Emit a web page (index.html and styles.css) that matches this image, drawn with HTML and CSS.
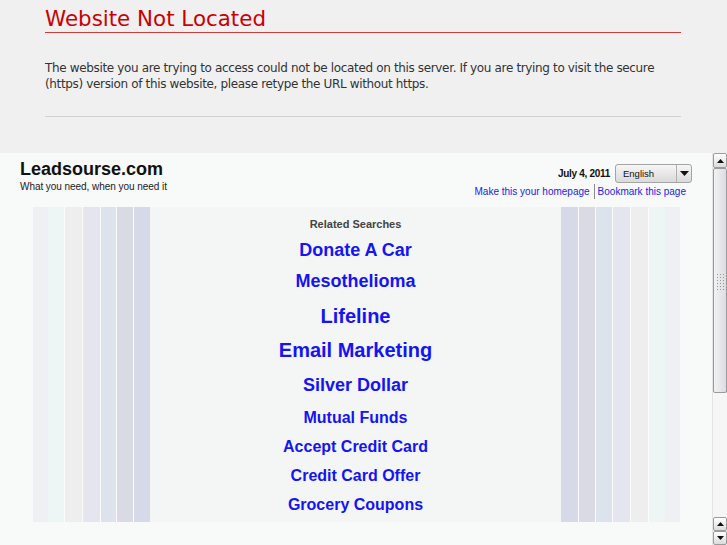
FILE: index.html
```html
<!DOCTYPE html>
<html>
<head>
<meta charset="utf-8">
<title>Website Not Located</title>
<link rel="stylesheet" href="styles.css">
</head>
<body>
<div class="notice">
  <h1 class="notice-title">Website Not Located</h1>
  <p class="notice-text">The website you are trying to access could not be located on this server. If you are trying to visit the secure (https) version of this website, please retype the URL without https.</p>
  <div class="notice-rule"></div>
</div>
<div class="frame">
  <div class="frame-body">
    <div class="site-header">
      <div class="brand">
        <div class="brand-name">Leadsourse.com</div>
        <div class="brand-tag">What you need, when you need it</div>
      </div>
      <div class="tools">
        <div class="tools-top">
          <span class="date">July 4, 2011</span>
          <div class="lang-select">
            <span class="lang-label">English</span>
            <span class="lang-arrow"><svg width="9" height="5" viewBox="0 0 9 5"><polygon points="0,0 9,0 4.5,5" fill="#111"/></svg></span>
          </div>
        </div>
        <div class="tools-links">
          <a class="tool-link" href="#">Make this your homepage</a>
          <span class="tool-sep"></span>
          <a class="tool-link" href="#">Bookmark this page</a>
        </div>
      </div>
    </div>
    <div class="stage">
      <div class="stripes">
        <div class="st st-dot w15"></div>
        <div class="st st-cyan w16"></div>
        <div class="gap"></div>
        <div class="st st-gray w17"></div>
        <div class="gap"></div>
        <div class="st st-lav w17"></div>
        <div class="gap"></div>
        <div class="st st-blue w15"></div>
        <div class="gap"></div>
        <div class="st st-mauve w16"></div>
        <div class="gap"></div>
        <div class="st st-deep w16"></div>
      </div>
      <div class="searches">
        <div class="searches-title">Related Searches</div>
        <a class="kw f18" href="#">Donate A Car</a>
        <a class="kw f18" href="#">Mesothelioma</a>
        <a class="kw f20 lower" href="#">Lifeline</a>
        <a class="kw f20" href="#">Email Marketing</a>
        <a class="kw f18 roomy" href="#">Silver Dollar</a>
        <a class="kw f16" href="#">Mutual Funds</a>
        <a class="kw f16" href="#">Accept Credit Card</a>
        <a class="kw f16" href="#">Credit Card Offer</a>
        <a class="kw f16" href="#">Grocery Coupons</a>
      </div>
      <div class="stripes">
        <div class="st st-deep w17"></div>
        <div class="gap"></div>
        <div class="st st-mauve w16"></div>
        <div class="gap"></div>
        <div class="st st-blue w16"></div>
        <div class="gap"></div>
        <div class="st st-lav w17"></div>
        <div class="gap"></div>
        <div class="st st-gray w17"></div>
        <div class="gap"></div>
        <div class="st st-cyan w16"></div>
        <div class="st st-dot w15"></div>
      </div>
    </div>
  </div>
  <div class="scrollbar">
    <div class="sb-btn sb-top"><svg width="7" height="4" viewBox="0 0 7 4"><polygon points="0,4 7,4 3.5,0" fill="#111"/></svg></div>
    <div class="sb-thumb"><div class="sb-grip"></div></div>
    <div class="sb-track"></div>
    <div class="sb-btn"><svg width="7" height="4" viewBox="0 0 7 4"><polygon points="0,4 7,4 3.5,0" fill="#111"/></svg></div>
    <div class="sb-btn"><svg width="7" height="4" viewBox="0 0 7 4"><polygon points="0,0 7,0 3.5,4" fill="#111"/></svg></div>
  </div>
</div>
</body>
</html>
```
FILE: styles.css
```css
html, body {
  margin: 0;
  padding: 0;
  height: 545px;
  overflow: hidden;
  background: #f0f0f0;
}

.notice {
  height: 153px;
  box-sizing: border-box;
  padding: 7px 46px 0 45px;
  font-family: "DejaVu Sans", sans-serif;
}

.notice-title {
  margin: 0;
  padding-bottom: 1px;
  font-size: 21.4px;
  line-height: 24px;
  font-weight: normal;
  color: #cc0000;
  border-bottom: 1px solid #d23a3a;
}

.notice-text {
  margin: 27px 0 0;
  font-size: 12px;
  line-height: 16px;
  letter-spacing: -0.35px;
  color: #333;
}

.notice-rule {
  margin-top: 24px;
  border-top: 1px solid #d0d0d0;
}

.frame {
  display: flex;
  height: 392px;
  background: #f8f9f9;
}

.frame-body {
  flex: 1;
  font-family: "Liberation Sans", Arial, sans-serif;
}

.site-header {
  display: flex;
  justify-content: space-between;
  padding: 6px 20px 0;
  height: 48px;
}

.brand-name {
  font-size: 18px;
  line-height: 21px;
  font-weight: bold;
  color: #111;
}

.brand-tag {
  margin-top: 1px;
  font-size: 10px;
  line-height: 12px;
  letter-spacing: -0.05px;
  color: #222;
}

.tools {
  display: flex;
  flex-direction: column;
  align-items: flex-end;
  padding-top: 5px;
}

.tools-top {
  display: flex;
  align-items: center;
  gap: 5px;
}

.date {
  font-size: 10px;
  line-height: 12px;
  font-weight: bold;
  letter-spacing: -0.3px;
  color: #111;
}

.lang-select {
  display: flex;
  align-items: stretch;
  width: 77px;
  height: 19px;
  box-sizing: border-box;
  border: 1px solid #a4a4a4;
  border-radius: 3px;
  background: linear-gradient(#f6f6f6, #dadada);
}

.lang-label {
  flex: 1;
  padding-left: 7px;
  font-size: 9.5px;
  line-height: 17px;
  color: #111;
}

.lang-arrow {
  display: flex;
  align-items: center;
  justify-content: center;
  width: 14px;
  border-left: 1px solid #b0b0b0;
}

.tools-links {
  display: flex;
  align-items: center;
  margin-top: 1px;
  margin-right: 6px;
}

.tool-link {
  font-size: 10px;
  line-height: 12px;
  color: #2222ee;
  text-decoration: none;
}

.tool-sep {
  width: 1px;
  height: 15px;
  margin: 0 3px 0 4px;
  background: #8a8a8a;
}

.stage {
  display: flex;
  width: 647px;
  height: 315px;
  margin: 0 0 0 33px;
}

.stripes {
  display: flex;
}

.st { height: 100%; }
.gap { width: 1px; background: #fbfbfb; }
.w15 { width: 15px; }
.w16 { width: 16px; }
.w17 { width: 17px; }

.st-dot { background: #eef0f4; }
.st-cyan { background: #eef5f5; }
.st-gray { background: #eeeeee; }
.st-lav { background: #e5e5f0; }
.st-blue { background: #dde3ec; }
.st-mauve { background: #dadae4; }
.st-deep { background: #d6d9e8; }

.searches {
  flex: 1;
  display: flex;
  flex-direction: column;
  align-items: center;
  padding-top: 10px;
  background: #f4f5f5;
}

.searches-title {
  margin-bottom: 4px;
  font-size: 11px;
  line-height: 14px;
  font-weight: bold;
  color: #444;
}

.kw {
  display: block;
  font-weight: bold;
  color: #1414f5;
  text-decoration: none;
}

.f20 { font-size: 20px; line-height: 34px; }
.f18 { font-size: 18px; line-height: 31px; }
.f16 { font-size: 16px; line-height: 29px; }
.lower { padding-top: 2px; }
.roomy { line-height: 36px; }

.scrollbar {
  display: flex;
  flex-direction: column;
  width: 15px;
  background: #f3f3f3;
  border-left: 1px solid #e4e4e4;
  box-sizing: border-box;
}

.sb-btn {
  display: flex;
  align-items: center;
  justify-content: center;
  height: 14px;
  box-sizing: border-box;
  border: 1px solid #9c9c9c;
  border-radius: 2px;
  background: linear-gradient(#ffffff, #dcdcdc);
}

.sb-top { height: 15px; }

.sb-thumb {
  height: 225px;
  box-sizing: border-box;
  border: 1px solid #9a9a9a;
  border-radius: 2px;
  background: linear-gradient(to right, #f2f2f4, #dcdde2);
  display: flex;
  justify-content: center;
  padding-top: 104px;
}

.sb-grip {
  width: 8px;
  height: 18px;
  background-image: radial-gradient(#9a9a9a 0.8px, transparent 1px);
  background-size: 3px 3px;
}

.sb-track {
  flex: 1;
  margin-bottom: 1px;
  background: #f6f6f6;
}
```
